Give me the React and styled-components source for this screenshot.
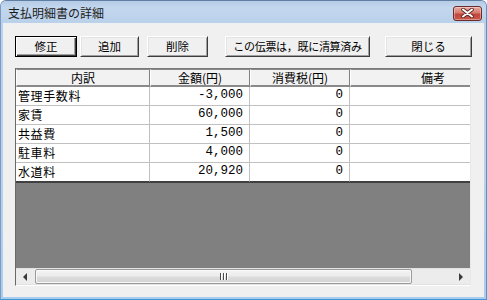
import React from "react";
import styled, { createGlobalStyle } from "styled-components";

const GlobalStyle = createGlobalStyle`
  html, body { margin: 0; padding: 0; background: #ffffff; }
  body {
    width: 487px; height: 300px; overflow: hidden;
    font-family: "Noto Sans CJK JP", "Liberation Sans", sans-serif;
  }
  #root { width: 487px; height: 300px; }
`;

const Window = styled.div`
  box-sizing: border-box;
  width: 487px;
  height: 300px;
  display: flex;
  flex-direction: column;
  background: linear-gradient(to bottom, #bcd2ec 0%, #b9d1ea 60%, #a9cdef 100%);
  border: 1px solid;
  border-color: #5f7ea3 #4a9ad2 #3f93d0 #7a9cc4;
  border-radius: 6px 6px 0 0;
  overflow: hidden;
`;

const TitleBar = styled.div`
  height: 22px;
  flex-shrink: 0;
  display: flex;
  align-items: center;
  justify-content: space-between;
  padding: 0 4px 0 7px;
  background: linear-gradient(to bottom, #b6cbe5 0%, #c3d7ee 30%, #bed3ec 70%, #b9d1ea 100%);
`;

const TitleText = styled.span`
  font-size: 12px;
  line-height: 16px;
  color: #1b1b1b;
  padding-top: 1px;
`;

const CloseButton = styled.div`
  box-sizing: border-box;
  width: 29px;
  height: 15px;
  margin-top: 2px;
  border: 1px solid #6b2c2c;
  border-radius: 3px;
  display: flex;
  align-items: center;
  justify-content: center;
  background: linear-gradient(to bottom, #e8a99f 0%, #d77b6e 45%, #c2463b 55%, #c9584a 100%);
  box-shadow: inset 0 0 0 1px rgba(255, 255, 255, 0.35);
`;

const Client = styled.div`
  flex: 1;
  margin: 0 2px 2px 2px;
  background: #f0f0f0;
  display: flex;
  flex-direction: column;
`;

const ButtonRow = styled.div`
  display: flex;
  margin: 13px 0 0 12px;
  height: 21px;
`;

const Button = styled.div`
  box-sizing: border-box;
  width: ${(p) => p.$w}px;
  margin-left: ${(p) => p.$ml || 0}px;
  height: 21px;
  display: flex;
  align-items: center;
  justify-content: center;
  font-size: ${(p) => (p.$tight ? "11px" : "11.5px")};
  letter-spacing: ${(p) => (p.$tight ? "-0.3px" : "0")};
  line-height: 14px;
  color: #000;
  background: #f0f0f0;
  white-space: nowrap;
  border: 1px solid;
  border-color: ${(p) =>
    p.$default ? "#000 #000 #000 #000" : "#ffffff #3c3c3c #3c3c3c #ffffff"};
  box-shadow: ${(p) =>
    p.$default
      ? "inset 1px 1px 0 #ffffff, inset -1px -1px 0 #3c3c3c, inset -2px -2px 0 #a0a0a0"
      : "inset 1px 1px 0 #e3e3e3, inset -1px -1px 0 #a0a0a0"};
  padding-bottom: 1px;
`;

const Grid = styled.div`
  box-sizing: border-box;
  width: 456px;
  height: 218px;
  margin: 11px 0 0 12px;
  border: 1px solid;
  border-color: #7a7a7a #e8e8e8 #ffffff #696969;
  display: flex;
  flex-direction: column;
  overflow: hidden;
  background: #808080;
`;

const HeaderRow = styled.div`
  display: flex;
  flex-shrink: 0;
  height: 18px;
`;

const HeaderCell = styled.div`
  box-sizing: border-box;
  flex-shrink: 0;
  width: ${(p) => p.$w}px;
  height: 18px;
  background: #f2f2f2;
  border-top: 1px solid #8a8a8a;
  border-bottom: 2px solid #8a8a8a;
  border-left: 1px solid #ffffff;
  border-right: 1px solid #808080;
  font-size: 12px;
  line-height: 15px;
  text-align: center;
  color: #000;
  white-space: nowrap;
`;

const Row = styled.div`
  display: flex;
  flex-shrink: 0;
  height: 19px;
  background: #ffffff;
`;

const Cell = styled.div`
  box-sizing: border-box;
  flex-shrink: 0;
  width: ${(p) => p.$w}px;
  height: 19px;
  border-right: 1px solid #c0c0c0;
  border-bottom: 1px solid ${(p) => (p.$last ? "#404040" : "#c0c0c0")};
  padding: ${(p) => (p.$num ? "0 6px 0 0" : "0 0 0 2px")};
  text-align: ${(p) => (p.$num ? "right" : "left")};
  font-family: ${(p) =>
    p.$num
      ? '"Liberation Mono", monospace'
      : '"Noto Sans CJK JP", sans-serif'};
  font-size: ${(p) => (p.$num ? "12.5px" : "12px")};
  letter-spacing: ${(p) => (p.$num ? "0" : "0.6px")};
  line-height: 17px;
  color: #000;
  white-space: nowrap;
`;

const EmptyArea = styled.div`
  flex: 1;
  background: #808080;
  border-top: 1px solid #404040;
`;

const ScrollBar = styled.div`
  flex-shrink: 0;
  height: 17px;
  display: flex;
  background: #ececec;
  box-shadow: inset 0 1px 0 #e2e2e2, inset 0 -1px 0 #e2e2e2;
`;

const Arrow = styled.div`
  width: 19px;
  flex-shrink: 0;
  display: flex;
  align-items: center;
  justify-content: center;
`;

const Thumb = styled.div`
  box-sizing: border-box;
  width: 377px;
  flex-shrink: 0;
  margin: 1px 0;
  border: 1px solid #9a9a9a;
  border-radius: 2px;
  background: linear-gradient(to bottom, #f4f4f4 0%, #ececec 45%, #dcdcdc 55%, #d2d2d2 100%);
  box-shadow: inset 0 0 0 1px #f8f8f8;
  display: flex;
  align-items: center;
  justify-content: center;
  gap: 1px;
`;

const Grip = styled.span`
  width: 1px;
  height: 7px;
  background: #4a4a4a;
  box-shadow: 1px 0 0 #ffffff;
  margin-right: 1px;
`;

const Track = styled.div`
  flex: 1;
`;

const columns = [134, 100, 100, 166];

const rows = [
  ["管理手数料", "-3,000", "0"],
  ["家賃", "60,000", "0"],
  ["共益費", "1,500", "0"],
  ["駐車料", "4,000", "0"],
  ["水道料", "20,920", "0"],
];

export default function App() {
  return (
    <>
      <GlobalStyle />
      <Window>
        <TitleBar>
          <TitleText>支払明細書の詳細</TitleText>
          <CloseButton>
            <svg width="13" height="10" viewBox="0 0 13 10">
              <path d="M2 1.5 L11 8.5 M11 1.5 L2 8.5" stroke="#5b2323" strokeWidth="3.6" strokeLinecap="round" />
              <path d="M2 1.5 L11 8.5 M11 1.5 L2 8.5" stroke="#ffffff" strokeWidth="2" strokeLinecap="round" />
            </svg>
          </CloseButton>
        </TitleBar>
        <Client>
          <ButtonRow>
            <Button $w={62} $default>修正</Button>
            <Button $w={59} $ml={3}>追加</Button>
            <Button $w={61} $ml={8}>削除</Button>
            <Button $w={145} $ml={17} $tight>この伝票は，既に清算済み</Button>
            <Button $w={87} $ml={15}>閉じる</Button>
          </ButtonRow>
          <Grid>
            <HeaderRow>
              <HeaderCell $w={columns[0]}>内訳</HeaderCell>
              <HeaderCell $w={columns[1]}>金額(円)</HeaderCell>
              <HeaderCell $w={columns[2]}>消費税(円)</HeaderCell>
              <HeaderCell $w={columns[3]}>備考</HeaderCell>
            </HeaderRow>
            {rows.map((r, i) => {
              const last = i === rows.length - 1;
              return (
                <Row key={i}>
                  <Cell $w={columns[0]} $last={last}>{r[0]}</Cell>
                  <Cell $w={columns[1]} $num $last={last}>{r[1]}</Cell>
                  <Cell $w={columns[2]} $num $last={last}>{r[2]}</Cell>
                  <Cell $w={columns[3]} $last={last}></Cell>
                </Row>
              );
            })}
            <EmptyArea />
            <ScrollBar>
              <Arrow>
                <svg width="5" height="8" viewBox="0 0 5 8">
                  <path d="M4 0 L0 4 L4 8 Z" fill="#3a3a3a" />
                </svg>
              </Arrow>
              <Thumb>
                <Grip />
                <Grip />
                <Grip />
              </Thumb>
              <Track />
              <Arrow>
                <svg width="5" height="8" viewBox="0 0 5 8">
                  <path d="M1 0 L5 4 L1 8 Z" fill="#3a3a3a" />
                </svg>
              </Arrow>
            </ScrollBar>
          </Grid>
        </Client>
      </Window>
    </>
  );
}
